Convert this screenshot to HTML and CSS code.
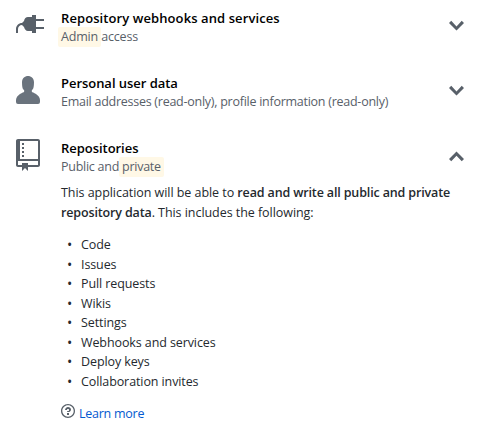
FILE: index.html
```html
<!DOCTYPE html>
<html lang="en">
<head>
<meta charset="utf-8">
<title>Authorize application</title>
<link rel="stylesheet" href="styles.css">
</head>
<body>
<main class="permissions">
  <section class="permission">
    <svg class="icon" width="28" height="32" viewBox="0 0 14 16"><path d="M14 6V5h-4V3H8v1H6c-1.03 0-1.77.81-2 2L3 7c-1.66 0-3 1.34-3 3v2h1v-2c0-1.11.89-2 2-2l1 1c.25 1.16.98 2 2 2h2v1h2v-2h4V9h-4V6h4z"/></svg>
    <div class="summary">
      <h2 class="title wide">Repository webhooks and services</h2>
      <p class="access short"><span class="mark">Admin</span> access</p>
    </div>
    <svg class="chevron" width="15" height="24" viewBox="0 0 10 16"><path d="M5 11L0 6l1.5-1.5L5 8.25 8.5 4.5 10 6l-5 5z"/></svg>
  </section>
  <section class="permission">
    <svg class="icon person" width="24" height="32" viewBox="0 0 12 16"><path d="M12 14.002a.998.998 0 0 1-.998.998H1.001A1 1 0 0 1 0 13.999V13c0-2.633 4-4 4-4s.229-.409 0-1c-.841-.62-.944-1.59-1-4 .173-2.413 1.867-3 3-3s2.827.586 3 3c-.056 2.41-.159 3.38-1 4-.229.59 0 1 0 1s4 1.367 4 4v1.002z"/></svg>
    <div class="summary">
      <h2 class="title">Personal user data</h2>
      <p class="access">Email addresses (read-only), profile information (read-only)</p>
    </div>
    <svg class="chevron" width="15" height="24" viewBox="0 0 10 16"><path d="M5 11L0 6l1.5-1.5L5 8.25 8.5 4.5 10 6l-5 5z"/></svg>
  </section>
  <section class="permission">
    <svg class="icon" width="24" height="32" viewBox="0 0 12 16"><path d="M4 9H3V8h1v1zm0-3H3v1h1V6zm0-2H3v1h1V4zm0-2H3v1h1V2zm8-1v12c0 .55-.45 1-1 1H6v2l-1.5-1.5L3 16v-2H1c-.55 0-1-.45-1-1V1c0-.55.45-1 1-1h10c.55 0 1 .45 1 1zm-1 10H1v2h2v-1h3v1h5v-2zm0-10H2v9h9V1z"/></svg>
    <div class="summary">
      <h2 class="title">Repositories</h2>
      <p class="access">Public and <span class="mark">private</span></p>
    </div>
    <svg class="chevron" width="15" height="24" viewBox="0 0 10 16"><path d="M10 10l-1.5 1.5L5 7.75 1.5 11.5 0 10l5-5 5 5z"/></svg>
  </section>
  <div class="details">
    <p class="text">This application will be able to <strong>read and write all public and private<br>repository data</strong>. This includes the following:</p>
    <ul class="list">
      <li>Code</li>
      <li>Issues</li>
      <li>Pull requests</li>
      <li>Wikis</li>
      <li>Settings</li>
      <li>Webhooks and services</li>
      <li>Deploy keys</li>
      <li>Collaboration invites</li>
    </ul>
    <div class="help">
      <svg class="question" width="14" height="16" viewBox="0 0 14 16"><path d="M6 10h2v2H6v-2zm4-3.5C10 8.64 8 9 8 9H6c0-.55.45-1 1-1h.5c.28 0 .5-.22.5-.5v-1c0-.28-.22-.5-.5-.5h-1c-.28 0-.5.22-.5.5V7H4c0-1.5 1.5-3 3-3s3 1 3 2.5zM7 2.3c3.14 0 5.7 2.56 5.7 5.7s-2.56 5.7-5.7 5.7A5.71 5.71 0 0 1 1.3 8c0-3.14 2.56-5.7 5.7-5.7zM7 1C3.14 1 0 4.14 0 8s3.14 7 7 7 7-3.14 7-7-3.14-7-7-7z"/></svg>
      <a class="link" href="#">Learn more</a>
    </div>
  </div>
</main>
</body>
</html>
```
FILE: styles.css
```css
body {
  margin: 0;
  background: #fff;
  color: #24292e;
  font: 12.5px/19.5px "Open Sans", "Noto Sans", sans-serif;
}

h2, p, ul {
  margin: 0;
  padding: 0;
}

svg {
  display: block;
  fill: #586069;
}

.permissions {
  padding: 9px 14px 0 16px;
}

.permission {
  display: grid;
  grid-template-columns: 45px 1fr 15px;
  height: 65px;
}

.person {
  fill: #6a737d;
}

.chevron {
  margin-top: 5px;
}

.title {
  color: #000;
  font-size: 13px;
  font-weight: 600;
  line-height: 18px;
  letter-spacing: -0.04px;
}

.title.wide {
  letter-spacing: 0.09px;
}

.access {
  margin-top: 1px;
  color: #586069;
  line-height: 18px;
  letter-spacing: -0.26px;
  white-space: nowrap;
}

.access.short {
  letter-spacing: -0.17px;
}

.mark {
  margin: 0 -3px;
  padding: 1px 3px 2px;
  border-radius: 2px;
  background: #fff8e6;
}

.details {
  margin: -21px 0 0 45px;
}

.text {
  line-height: 20px;
  letter-spacing: -0.05px;
  white-space: nowrap;
}

.text strong {
  font-weight: 600;
  letter-spacing: -0.14px;
}

.list {
  margin-top: 12px;
  padding-left: 20px;
  letter-spacing: -0.1px;
  list-style: none;
}

.list li::before {
  content: "•";
  float: left;
  width: 14px;
  margin-left: -14px;
  font-size: 14px;
}

.help {
  display: flex;
  margin-top: 12px;
  gap: 4px;
}

.link {
  margin-top: 1px;
  color: #0359d0;
  letter-spacing: -0.25px;
  text-decoration: none;
}
```
